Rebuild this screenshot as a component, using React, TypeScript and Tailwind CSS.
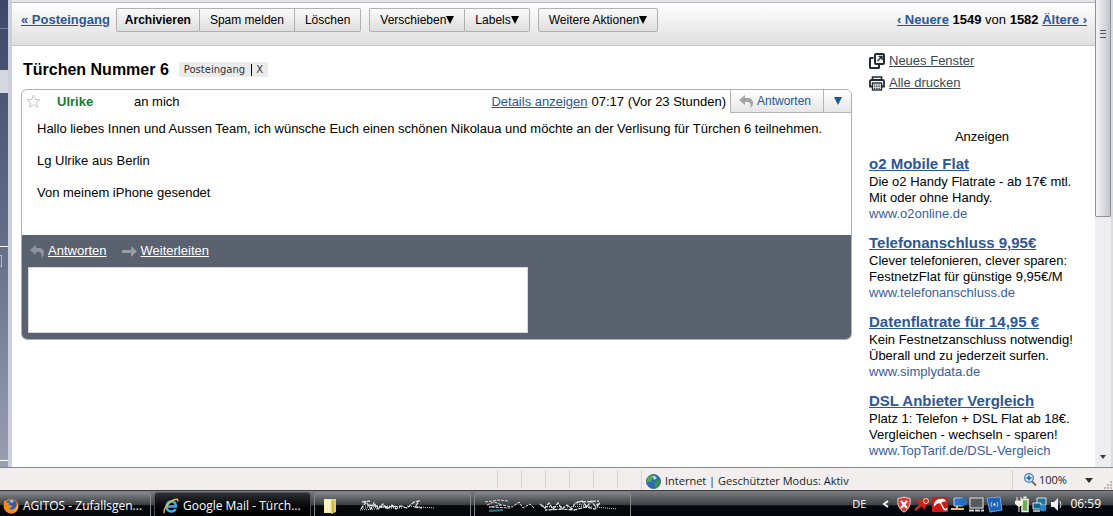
import React from 'react';

interface Ad {
  title: string;
  lines: string[];
  url: string;
}

const ADS: Ad[] = [
  {
    title: 'o2 Mobile Flat',
    lines: ['Die o2 Handy Flatrate - ab 17€ mtl.', 'Mit oder ohne Handy.'],
    url: 'www.o2online.de',
  },
  {
    title: 'Telefonanschluss 9,95€',
    lines: ['Clever telefonieren, clever sparen:', 'FestnetzFlat für günstige 9,95€/M'],
    url: 'www.telefonanschluss.de',
  },
  {
    title: 'Datenflatrate für 14,95 €',
    lines: ['Kein Festnetzanschluss notwendig!', 'Überall und zu jederzeit surfen.'],
    url: 'www.simplydata.de',
  },
  {
    title: 'DSL Anbieter Vergleich',
    lines: ['Platz 1: Telefon + DSL Flat ab 18€.', 'Vergleichen - wechseln - sparen!'],
    url: 'www.TopTarif.de/DSL-Vergleich',
  },
];

function ReplyIcon({ className }: { className: string }) {
  return (
    <svg className={className} width="14" height="13" viewBox="0 0 14 13" aria-hidden="true">
      <path d="M0 5 6 0v3h3c3 0 5 2 5 5 0 2-1 4-3 5 .8-2 .8-3 .3-4C10.700 7.500 9.500 7 8 7H6v3z" fill="currentColor" />
    </svg>
  );
}

function ForwardIcon() {
  return (
    <svg className="text-[#999da3]" width="15" height="11" viewBox="0 0 15 11" aria-hidden="true">
      <path d="M0 4h9V0l6 5.500L9 11V7H0z" fill="currentColor" />
    </svg>
  );
}

function StarIcon() {
  return (
    <svg width="15" height="15" viewBox="0 0 15 15" aria-hidden="true">
      <path d="m7.500 1 1.700 4.500 4.800.2-3.800 3 1.400 4.700-4.100-2.700-4.100 2.700 1.400-4.700-3.800-3 4.800-.2z" fill="#fff" stroke="#c6c6c6" />
    </svg>
  );
}

function NewWindowIcon() {
  return (
    <svg width="16" height="16" viewBox="0 0 16 16" fill="none" stroke="#222a33" aria-hidden="true">
      <path d="M4.500 5H1.500Q1 5 1 5.500v9q0 .5.500.5h8q.5 0 .5-.5V12" strokeWidth="2" />
      <rect x="6" y="1" width="9" height="10" rx="1" strokeWidth="2" />
      <path d="m8.500 8 4-4M9.500 3.500H13V7" strokeWidth="1.400" />
    </svg>
  );
}

function PrinterIcon() {
  return (
    <svg width="16" height="15" viewBox="0 0 16 15" fill="none" stroke="#222a33" aria-hidden="true">
      <path d="M3.500 4V1h9v3" strokeWidth="1.600" />
      <path d="M3 10.500H1V5.500Q1 4 2.500 4h11Q15 4 15 5.500v5h-2" strokeWidth="1.800" />
      <rect x="3.500" y="7" width="9" height="7" fill="#fff" strokeWidth="1.400" />
      <path d="M5 9h6M5 10.700h6M5 12.400h6" strokeDasharray="1.400 .8" strokeWidth="1" />
    </svg>
  );
}

function GlobeIcon() {
  return (
    <svg width="15" height="15" viewBox="0 0 15 15" aria-hidden="true">
      <circle cx="7.500" cy="7.500" r="7" fill="#2b6bb5" stroke="#4b6379" />
      <path d="M3 2.500C5 .8 8 1 9 2L8 4 6 5 5.500 8 3 7.500 1 9C.6 6 1.200 4 3 2.500Z" fill="#56a64b" />
      <path d="m9 7 3-1.500 2 1C14 10 12 12.500 10 13.500L8.500 11z" fill="#3d9150" />
      <path d="M6 2.500 9 2l2 2-2.500 2z" fill="#a9d7f2" />
    </svg>
  );
}

function ZoomIcon() {
  return (
    <svg width="13" height="14" viewBox="0 0 13 14" aria-hidden="true">
      <path d="m8 8.500 4 4" stroke="#8b6a4e" strokeWidth="2" />
      <circle cx="5" cy="5" r="4.300" fill="#d5ecfb" stroke="#3f7fc0" strokeWidth="1.300" />
      <path d="M5 2.500v5M2.500 5h5" stroke="#1c5da8" strokeWidth="1.500" />
    </svg>
  );
}

function FirefoxIcon() {
  return (
    <svg className="shrink-0" width="16" height="16" viewBox="0 0 16 16" aria-hidden="true">
      <circle cx="8" cy="8" r="7.500" fill="#e8711a" />
      <circle cx="8.500" cy="6.500" r="5" fill="#315fa5" />
      <path d="M6 3c1-1.500 4-1.500 5 0L9 5z" fill="#9cc8ef" />
      <path d="M1 4c-.5 5 1 10 7 11.500 5 0 8-4 7.300-9.500-.5 4-3 6-6 6-2 0-3-1-3-2l3-1-1.500-2H5.500L6.500 5 4 5 2 2z" fill="#f08c1d" />
      <path d="M14 4c1 4-1 8-5 9 4 .5 6-3 6-5.500z" fill="#fbcf3a" />
    </svg>
  );
}

function ExplorerIcon() {
  return (
    <svg className="shrink-0" width="16" height="16" viewBox="0 0 16 16" fill="none" aria-hidden="true">
      <path d="M3.500 8.500h9.300C13 5 11 3.300 8.500 3.300 5.500 3.300 3.500 5.500 3.500 8.500c0 3 2 5 4.700 5 2 0 3.500-1 4.300-2.500" stroke="#45a9ee" strokeWidth="2.600" />
      <path d="M1.500 15C-.5 12 5 4.500 10.500 2c3-1.400 5-1 4 1.500" stroke="#f3c033" strokeWidth="1.400" />
    </svg>
  );
}

function FolderIcon() {
  return (
    <svg className="shrink-0" width="16" height="16" viewBox="0 0 16 16" aria-hidden="true">
      <path d="M1 1h8v14H1z" fill="#f7edaa" />
      <path d="m9 1 4 0v13l-5 2V3z" fill="#e5cf67" />
      <path d="M3 2v12M6 2v12" stroke="#fffbe0" />
      <path d="M10 3v11" stroke="#b99b35" />
    </svg>
  );
}

// window titles that were smeared over
function Scribble({ wide = false }: { wide?: boolean }) {
  return wide ? (
    <svg width="138" height="14" viewBox="0 0 138 14" fill="none" stroke="#dfe1e2" aria-hidden="true">
      <path d="m2 3 14-2 9 1M4 6l7-3 8 3-13 2 21 1M20 6l9 2 7-5 4 6 7-4 4 4" strokeDasharray="3 1" />
      <path d="m6 12 14-1" stroke="#2c7881" strokeWidth="2" />
      <path d="m57 5 5 4 4-5 4 6 5-6 4 6 5-4 5 4 3-6 7-2 5 6 4-6 4 5 5-3-5 6-9-2-12 3-11-1-18 1M94 3l22-1" strokeDasharray="4 1" strokeWidth="1.300" />
      <path d="m112 8 22 2M60 8h14m20-3 16 3M58 7l24 1m2 0 20-1" strokeDasharray="1 1" />
    </svg>
  ) : (
    <svg width="96" height="13" viewBox="0 0 80 13" preserveAspectRatio="xMaxYMid meet" fill="none" stroke="#dfe1e2" aria-hidden="true">
      <path d="m2 10 5-7 5 7 3-6 4 6 5-5 4 5 5-4 4 4 5-3 6 2 7-6 5-1-4 6 7 1M3 3l8-1M10 6l13 2 22-1" strokeDasharray="4 1" strokeWidth="1.300" />
      <path d="m1 11 17-1M26 9h18m4-2 28 2M6 7h30M4 9l34-1" strokeDasharray="1 1" />
    </svg>
  );
}

function TrayIcons() {
  return (
    <>
      <svg width="106" height="17" viewBox="0 0 106 17" aria-hidden="true">
        {/* security centre */}
        <path d="M1 2.500 7 1l6 1.500c1 6-1 11-6 13.500C2 13.500 0 8.500 1 2.500z" fill="#d8383a" stroke="#e9dada" />
        <path d="m4 5 6 7m0-7-6 7" stroke="#fff" strokeWidth="2.200" />
        {/* pin */}
        <path d="m18 14 6-5" stroke="#c92a20" strokeWidth="2.500" />
        <path d="m19 4 5 1 4-3 5 4-4 4-1 4-9-9z" fill="#cb2318" />
        <circle cx="29" cy="5" r="2.500" fill="none" stroke="#ffd9a8" />
        {/* umbrella */}
        <path d="M35 1h16v15H35z" fill="#cf1717" />
        <path d="M37 11C36 5 41 1.500 47 3c1 .5 2 1.500 2 3-2-1-4 0-5 1.500C41 6.500 39 8 37 11z" fill="#fff" />
        <path d="m43 6 4 7q2 2 3-1" stroke="#fff" strokeWidth="1.400" fill="none" />
        {/* network */}
        <path d="M57 2h9v8h-9z" fill="#2d6fd2" stroke="#b6cfe7" />
        <circle cx="66" cy="6" r="4" fill="#2870bd" />
        <path d="M54 13h13M60 10v3" stroke="#e5bf59" strokeWidth="2" />
        {/* monitor */}
        <path d="M73 2h13v10H73z" fill="#555b5e" stroke="#b4b8b9" strokeWidth="1.500" />
        <path d="M72 14.500h15" stroke="#d2d4d4" strokeWidth="2" strokeDasharray="5 1" />
        {/* wireless */}
        <path d="m90 2 13-1 2 13-12 2z" fill="#1d63b5" stroke="#6ba8e8" />
        <path d="M95 6q-2 2 0 5m5-5q2 2 0 5" stroke="#a9d4ff" fill="none" />
        <circle cx="97.500" cy="8.500" r="1.200" fill="#d7ecff" />
      </svg>
      <svg width="49" height="17" viewBox="0 0 49 17" aria-hidden="true">
        {/* battery */}
        <path d="M7 3.500h6v12H7z" fill="#6caa55" stroke="#eef2ec" strokeWidth="1.500" />
        <path d="M8.500 1.500h3" stroke="#fff" strokeWidth="2" />
        <path d="M2 1v4m4-4v4M.5 5h7v3L4 10.500.5 8zM4 10v6" fill="#f4f1df" stroke="#f4f1df" />
        {/* lan */}
        <path d="M22 2h9v7h-9z" fill="#1d7599" stroke="#dbe9ee" />
        <path d="M18 7h8v6h-8z" fill="#146493" stroke="#dbe9ee" />
        <circle cx="28" cy="12" r="3.500" fill="#2b83bd" />
        <path d="M18 15h7" stroke="#d5dadb" strokeWidth="1.500" />
        {/* volume */}
        <path d="M36 6h3l4-4v13l-4-4h-3z" fill="#eef0f0" />
        <path d="M45 5q2 3.500 0 7" stroke="#dfe3e3" fill="none" />
      </svg>
    </>
  );
}

function ToolButton({
  children,
  className = 'px-[10px]',
}: {
  children: React.ReactNode;
  className?: string;
}) {
  return (
    <button
      type="button"
      className={`h-6 cursor-pointer whitespace-nowrap border border-[#b0b0b0] bg-linear-to-b from-[#fafafa] to-[#dedede] text-xs ${className}`}
    >
      {children}
    </button>
  );
}

function Toolbar() {
  return (
    <div className="flex h-11 items-start border-y border-t-[#b4b8bf] border-b-[#c4c4c6] bg-linear-to-b from-white to-[#dfdfdf] pt-[5px] pr-2 pl-[9px]">
      <a href="#inbox" className="mr-[6px] font-bold leading-6 text-[#2b5797] underline">
        « Posteingang
      </a>
      <div className="flex">
        <ToolButton className="rounded-l-xs px-2 font-bold">Archivieren</ToolButton>
        <ToolButton className="border-l-0 px-[10px]">Spam melden</ToolButton>
        <ToolButton className="rounded-r-xs border-l-0 px-[10px]">Löschen</ToolButton>
      </div>
      <div className="ml-2 flex">
        <ToolButton className="rounded-l-xs px-[10px]">
          Verschieben<Caret />
        </ToolButton>
        <ToolButton className="rounded-r-xs border-l-0 px-[10px]">
          Labels<Caret />
        </ToolButton>
      </div>
      <div className="ml-2 flex">
        <ToolButton className="rounded-xs px-[10px]">
          Weitere Aktionen<Caret />
        </ToolButton>
      </div>
      <div className="ml-auto whitespace-nowrap leading-6">
        <a href="#newer" className="font-bold text-[#2b5797] underline">‹ Neuere</a> <b>1549</b> von <b>1582</b>{' '}
        <a href="#older" className="font-bold text-[#2b5797] underline">Ältere ›</a>
      </div>
    </div>
  );
}

function Caret() {
  return (
    <svg className="inline-block align-baseline" width="8" height="8" viewBox="0 0 8 8" aria-hidden="true">
      <path d="M0 0h8L4 8z" fill="currentColor" />
    </svg>
  );
}

function Message() {
  return (
    <article className="flex flex-col overflow-hidden rounded-md border border-[#b0b0b0]">
      <header className="flex h-[23px] items-center">
        <button type="button" aria-label="Markieren" className="ml-1 cursor-pointer">
          <StarIcon />
        </button>
        <span className="ml-4 w-[77px] font-bold text-[#157a2c]">Ulrike</span>
        <span>an mich</span>
        <div className="ml-auto flex items-center self-stretch whitespace-nowrap">
          <a href="#details" className="mr-1 text-[#2b5797] underline">Details anzeigen</a>
          <span>07:17 (Vor 23 Stunden)</span>
          <button
            type="button"
            className="ml-1 flex cursor-pointer items-center gap-1 self-stretch border-b border-l border-[#b4b4b4] bg-linear-to-b from-white to-[#e6e6e6] pr-3 pl-2 text-xs text-[#2b5797]"
          >
            <ReplyIcon className="text-[#a3a3a3]" />
            Antworten
          </button>
          <button
            type="button"
            aria-label="Weitere Antwortoptionen"
            className="flex w-7 cursor-pointer items-center justify-center self-stretch border-b border-l border-[#b4b4b4] bg-linear-to-b from-white to-[#e6e6e6] text-[#165a9c]"
          >
            <Caret />
          </button>
        </div>
      </header>
      <div className="space-y-4 px-[15px] pt-2 pb-[34px] leading-4">
        <p>
          Hallo liebes Innen und Aussen Team, ich wünsche Euch einen schönen Nikolaua und möchte an der Verlisung für
          Türchen 6 teilnehmen.
        </p>
        <p>Lg Ulrike aus Berlin</p>
        <p>Von meinem iPhone gesendet</p>
      </div>
      <footer className="bg-[#5b626f] px-[6px] pt-2 pb-[6px] text-white">
        <div className="flex h-4 items-center pl-[2px]">
          <ReplyIcon className="text-[#8f949c]" />
          <a href="#reply" className="ml-1 underline">Antworten</a>
          <span className="ml-[15px]">
            <ForwardIcon />
          </span>
          <a href="#forward" className="ml-1 underline">Weiterleiten</a>
        </div>
        <textarea
          aria-label="Antwort"
          className="mt-2 block h-[66px] w-[500px] resize-none border border-[#d6d8dc] bg-white text-black outline-none"
        />
      </footer>
    </article>
  );
}

function Sidebar() {
  return (
    <aside className="w-[226px] shrink-0 pt-1">
      <ul className="text-[#3d4756]">
        <li className="flex h-[22px] items-center gap-1">
          <NewWindowIcon />
          <a href="#window" className="underline">Neues Fenster</a>
        </li>
        <li className="flex h-[22px] items-center gap-1">
          <PrinterIcon />
          <a href="#print" className="underline">Alle drucken</a>
        </li>
      </ul>
      <h2 className="mt-[35px] text-center leading-4">Anzeigen</h2>
      <div className="mt-[9px] space-y-[11px]">
        {ADS.map((ad) => (
          <div key={ad.url} className="whitespace-nowrap leading-4">
            <a href="#ad" className="block text-[15px] leading-5 font-bold text-[#2b5797] underline">
              {ad.title}
            </a>
            {ad.lines.map((line) => (
              <p key={line}>{line}</p>
            ))}
            <a href="#ad" className="block text-[#3860a0]">{ad.url}</a>
          </div>
        ))}
      </div>
    </aside>
  );
}

function WindowEdge() {
  return (
    <div className="flex w-3 shrink-0" aria-hidden="true">
      <div className="flex w-2 flex-col bg-linear-to-b from-[#3d4869] via-[#626c87] to-[#9b9fb2]">
        <div className="h-[29px] border-b border-[#76809a]" />
        <div className="mt-[41px] h-[23px] bg-[#d5d7e1]" />
        <div className="h-[154px] border-b border-white" />
        <div className="mt-2 h-3 w-[2px] border-y border-r border-[#b4bac9]" />
        <div className="mb-[6px] grow border-b border-white" />
      </div>
      <div className="w-1 bg-[#cdd0dc]" />
    </div>
  );
}

function Scrollbar() {
  return (
    <div className="flex w-[18px] shrink-0 flex-col items-center justify-between border-r-2 border-[#dcdce0] bg-[#eeeef0]" aria-hidden="true">
      <div className="flex h-[217px] w-full justify-center rounded-b-xs border border-t-0 border-[#8f9096] bg-linear-to-r from-[#f5f5f6] to-[#c4c5cb] pt-[30px]">
        <div className="h-2 w-[6px] border-y border-[#55565c]">
          <div className="mt-[2px] h-px bg-[#55565c]" />
        </div>
      </div>
      <svg className="mb-2" width="6" height="4" viewBox="0 0 6 4">
        <path d="M0 0h6L3 4z" fill="#3c3c3c" />
      </svg>
    </div>
  );
}

function StatusBar() {
  return (
    <div className="flex h-[23px] items-stretch justify-end border-t border-[#88888c] bg-[#f1eeed] font-['Open_Sans','Noto_Sans',sans-serif] text-[11px] text-[#1c1c1c]">
      {Array.from({ length: 6 }, (_, i) => (
        <div key={i} className="my-[2px] w-6 border-l border-[#d6d2d1]" />
      ))}
      <div className="mt-[2px] flex w-[371px] items-center gap-1 border-l border-[#d6d2d1] pt-[2px] pl-1">
        <GlobeIcon />
        Internet | Geschützter Modus: Aktiv
      </div>
      <div className="mt-[2px] flex w-[101px] items-center gap-[2px] border-l border-[#d6d2d1] pl-[11px]">
        <ZoomIcon />
        100%
        <svg className="ml-4" width="8" height="5" viewBox="0 0 8 5" aria-hidden="true">
          <path d="M0 0h8L4 5z" fill="#2e2e2e" />
        </svg>
        <svg className="ml-auto self-end" width="10" height="10" viewBox="0 0 10 10" fill="#bcb8b8" aria-hidden="true">
          <path d="M7 1h2v2H7zM4 4h2v2H4zM7 4h2v2H7zM1 7h2v2H1zM4 7h2v2H4zM7 7h2v2H7z" />
        </svg>
      </div>
    </div>
  );
}

function TaskButton({ active = false, children }: { active?: boolean; children: React.ReactNode }) {
  return (
    <button
      type="button"
      className={`flex h-full w-[157px] cursor-pointer items-center gap-1 rounded-t-sm border border-b-0 pt-[2px] pl-2 whitespace-nowrap ${
        active
          ? 'border-[#4c5053] bg-linear-to-b from-[#2d3033] to-black'
          : 'border-[#85898b] bg-linear-to-b from-[#7f8385] from-0% via-[#3b3f42] via-50% to-[#06080c] to-55%'
      }`}
    >
      {children}
    </button>
  );
}

function Taskbar() {
  return (
    <div className="flex h-[26px] items-stretch border-t border-[#3a3c3e] bg-linear-to-b from-[#7b7f81] from-0% via-[#3e4245] via-55% to-[#04070d] to-60% pt-px font-['Open_Sans','Noto_Sans',sans-serif] text-xs text-white">
      <div className="-ml-[6px] flex gap-[3px]">
        <TaskButton>
          <FirefoxIcon />
          AGITOS - Zufallsgen...
        </TaskButton>
        <TaskButton active>
          <ExplorerIcon />
          Google Mail - Türch...
        </TaskButton>
        <TaskButton>
          <FolderIcon />
          <Scribble />
        </TaskButton>
        <TaskButton>
          <Scribble wide />
        </TaskButton>
      </div>
      <div className="ml-auto flex items-center pr-3">
        <span className="text-[11px]">DE</span>
        <svg className="mr-2 ml-4" width="7" height="8" viewBox="0 0 7 8" fill="none" aria-hidden="true">
          <path d="M6 1 2 4l4 3" stroke="#fff" strokeWidth="2" />
        </svg>
        <div className="mr-[6px] flex gap-3">
          <TrayIcons />
        </div>
        <time>06:59</time>
      </div>
    </div>
  );
}

function App() {
  return (
    <div className="flex min-h-screen flex-col bg-white font-['Liberation_Sans',Arial,sans-serif] text-[13px] text-black">
      <div className="flex grow items-stretch">
        <WindowEdge />
        <main className="min-w-0 grow border-t-2 border-[#ebe5e8]">
          <Toolbar />
          <div className="flex gap-[17px] pl-[9px]">
            <section className="min-w-0 grow">
              <div className="flex h-[43px] items-center gap-[10px] pt-1 pl-[2px]">
                <h1 className="text-base font-bold">Türchen Nummer 6</h1>
                <span className="flex h-[15px] items-center bg-[#ebebeb] px-[5px] font-['DejaVu_Sans',Verdana,sans-serif] text-[10px] leading-3 text-[#333]">
                  Posteingang
                  <button type="button" aria-label="Label entfernen" className="ml-[6px] cursor-pointer border-l border-black pl-1">
                    X
                  </button>
                </span>
              </div>
              <Message />
            </section>
            <Sidebar />
          </div>
        </main>
        <Scrollbar />
      </div>
      <StatusBar />
      <Taskbar />
    </div>
  );
}

export default App;
